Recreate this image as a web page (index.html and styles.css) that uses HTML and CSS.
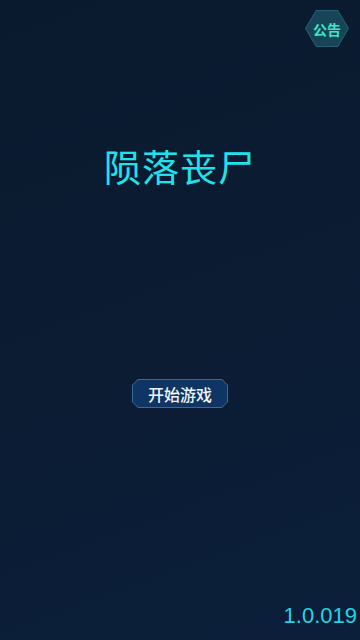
FILE: index.html
```html
<!DOCTYPE html>
<html lang="zh-CN">
<head>
    <meta charset="UTF-8">
    <meta name="viewport" content="width=device-width, initial-scale=1.0">
    <title>陨落丧尸</title>
    <link rel="stylesheet" href="styles.css">
</head>
<body>
    <div class="screen">
        <div class="top-bar">
            <button class="notice-btn"><span>公告</span></button>
        </div>

        <h1 class="game-title">陨落丧尸</h1>

        <button class="start-btn"><span>开始游戏</span></button>

        <div class="footer">
            <span class="version">1.0.019</span>
        </div>
    </div>
</body>
</html>
```

FILE: styles.css
```css
* {
    margin: 0;
    padding: 0;
    box-sizing: border-box;
}

html, body {
    height: 100%;
}

body {
    font-family: "Noto Sans CJK SC", "Noto Sans", sans-serif;
    background: linear-gradient(160deg, #0a1a2e 0%, #0b1c33 50%, #0c1f3a 100%);
    color: white;
}

.screen {
    height: 640px;
    display: flex;
    flex-direction: column;
    align-items: center;
}

.top-bar {
    width: 100%;
    display: flex;
    justify-content: flex-end;
    padding: 10px 11px 0 0;
}

/* 六边形公告按钮 */
.notice-btn {
    width: 44px;
    height: 37px;
    border: none;
    background: #2b6072;
    clip-path: polygon(25% 0, 75% 0, 100% 50%, 75% 100%, 25% 100%, 0 50%);
    display: flex;
    align-items: center;
    justify-content: center;
    position: relative;
    isolation: isolate;
    font-family: inherit;
    font-size: 14px;
    font-weight: 700;
    color: #3ee8c8;
}

.notice-btn::before {
    content: "";
    position: absolute;
    inset: 1px;
    background: #184457;
    clip-path: polygon(25% 0, 75% 0, 100% 50%, 75% 100%, 25% 100%, 0 50%);
    z-index: -1;
}

.game-title {
    margin-top: 97px;
    font-size: 37px;
    font-weight: 400;
    letter-spacing: 1px;
    color: #20e2ec;
    line-height: 44px;
}

/* 切角开始按钮 */
.start-btn {
    margin-top: 191px;
    width: 96px;
    height: 29px;
    border: none;
    background: #3a6a9c;
    clip-path: polygon(6px 0, calc(100% - 6px) 0, 100% 6px, 100% calc(100% - 6px), calc(100% - 6px) 100%, 6px 100%, 0 calc(100% - 6px), 0 6px);
    position: relative;
    isolation: isolate;
    font-family: inherit;
    font-size: 16px;
    font-weight: 500;
    color: #f2f5f8;
}

.start-btn::before {
    content: "";
    position: absolute;
    inset: 1px;
    background: #0e3563;
    clip-path: polygon(5px 0, calc(100% - 5px) 0, 100% 5px, 100% calc(100% - 5px), calc(100% - 5px) 100%, 5px 100%, 0 calc(100% - 5px), 0 5px);
    z-index: -1;
}

.footer {
    margin-top: auto;
    width: 100%;
    display: flex;
    justify-content: flex-end;
    padding: 0 3px 11px 0;
}

.version {
    font-family: "Liberation Sans", Arial, sans-serif;
    font-size: 22px;
    line-height: 26px;
    color: #22d4e6;
}
```
